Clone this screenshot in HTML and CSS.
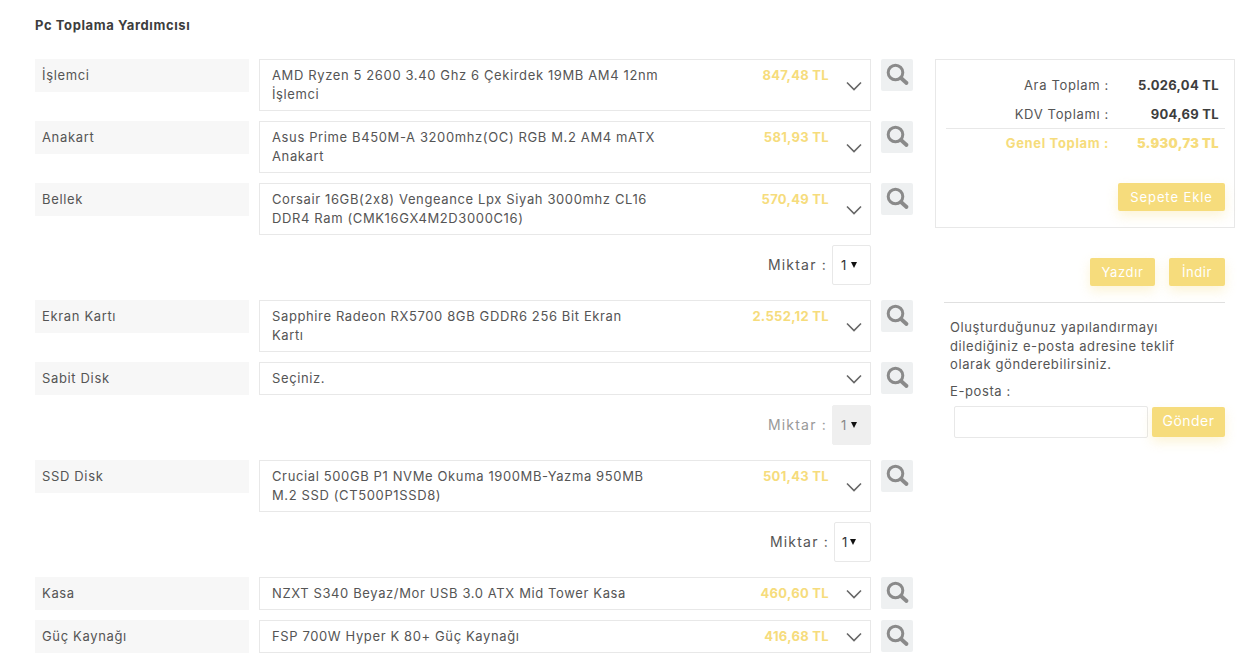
FILE: index.html
```html
<!DOCTYPE html>
<html lang="tr">
<head>
  <meta charset="UTF-8" />
  <title>Pc Toplama Yardımcısı</title>
  <link rel="stylesheet" href="styles.css">
</head>
<body>

<svg class="defs" width="0" height="0">
  <symbol id="search" viewBox="0 0 32 32">
    <circle cx="14.5" cy="13.5" r="7.3" fill="none" stroke="currentColor" stroke-width="3"/>
    <path d="M20 19l5.5 5" fill="none" stroke="currentColor" stroke-width="3.8" stroke-linecap="round"/>
  </symbol>
  <symbol id="chevron" viewBox="0 0 16 10">
    <path d="M1 1.5l7 7 7-7" fill="none" stroke="currentColor" stroke-width="1.6"/>
  </symbol>
</svg>

<h1 class="title">Pc Toplama Yardımcısı</h1>

<div class="page">
  <!-- Parça listesi -->
  <div class="parts">
    <div class="row">
      <div class="label">İşlemci</div>
      <div class="select tall">
        <span class="name">AMD Ryzen 5 2600 3.40 Ghz 6 Çekirdek 19MB AM4 12nm İşlemci</span>
        <span class="price">847,48 TL</span>
        <svg class="chevron"><use href="#chevron"/></svg>
      </div>
      <div class="search"><svg><use href="#search"/></svg></div>
    </div>
    <div class="row">
      <div class="label">Anakart</div>
      <div class="select tall">
        <span class="name">Asus Prime B450M-A 3200mhz(OC) RGB M.2 AM4 mATX Anakart</span>
        <span class="price">581,93 TL</span>
        <svg class="chevron"><use href="#chevron"/></svg>
      </div>
      <div class="search"><svg><use href="#search"/></svg></div>
    </div>
    <div class="row">
      <div class="label">Bellek</div>
      <div class="select tall">
        <span class="name">Corsair 16GB(2x8) Vengeance Lpx Siyah 3000mhz CL16 DDR4 Ram (CMK16GX4M2D3000C16)</span>
        <span class="price">570,49 TL</span>
        <svg class="chevron"><use href="#chevron"/></svg>
      </div>
      <div class="search"><svg><use href="#search"/></svg></div>
    </div>
    <div class="qty">
      <span class="qty-label">Miktar :</span>
      <div class="qty-select">1<i></i></div>
    </div>
    <div class="row">
      <div class="label">Ekran Kartı</div>
      <div class="select tall">
        <span class="name">Sapphire Radeon RX5700 8GB GDDR6 256 Bit Ekran<br>Kartı</span>
        <span class="price">2.552,12 TL</span>
        <svg class="chevron"><use href="#chevron"/></svg>
      </div>
      <div class="search"><svg><use href="#search"/></svg></div>
    </div>
    <div class="row">
      <div class="label">Sabit Disk</div>
      <div class="select">
        <span class="name">Seçiniz.</span>
        <svg class="chevron"><use href="#chevron"/></svg>
      </div>
      <div class="search"><svg><use href="#search"/></svg></div>
    </div>
    <div class="qty disabled">
      <span class="qty-label">Miktar :</span>
      <div class="qty-select">1<i></i></div>
    </div>
    <div class="row">
      <div class="label">SSD Disk</div>
      <div class="select tall">
        <span class="name">Crucial 500GB P1 NVMe Okuma 1900MB-Yazma 950MB M.2 SSD (CT500P1SSD8)</span>
        <span class="price">501,43 TL</span>
        <svg class="chevron"><use href="#chevron"/></svg>
      </div>
      <div class="search"><svg><use href="#search"/></svg></div>
    </div>
    <div class="qty narrow">
      <span class="qty-label">Miktar :</span>
      <div class="qty-select">1<i></i></div>
    </div>
    <div class="row">
      <div class="label">Kasa</div>
      <div class="select">
        <span class="name">NZXT S340 Beyaz/Mor USB 3.0 ATX Mid Tower Kasa</span>
        <span class="price">460,60 TL</span>
        <svg class="chevron"><use href="#chevron"/></svg>
      </div>
      <div class="search"><svg><use href="#search"/></svg></div>
    </div>
    <div class="row last">
      <div class="label">Güç Kaynağı</div>
      <div class="select">
        <span class="name">FSP 700W Hyper K 80+ Güç Kaynağı</span>
        <span class="price">416,68 TL</span>
        <svg class="chevron"><use href="#chevron"/></svg>
      </div>
      <div class="search"><svg><use href="#search"/></svg></div>
    </div>
  </div>

  <!-- Toplamlar ve teklif -->
  <div class="side">
    <div class="summary">
      <div class="sum-line"><span>Ara Toplam :</span><b>5.026,04 TL</b></div>
      <div class="sum-line"><span>KDV Toplamı :</span><b>904,69 TL</b></div>
      <div class="sum-line total"><span>Genel Toplam :</span><b>5.930,73 TL</b></div>
      <div class="cart"><a class="btn wide">Sepete Ekle</a></div>
    </div>
    <div class="actions">
      <a class="btn print">Yazdır</a>
      <a class="btn download">İndir</a>
    </div>
    <div class="offer">
      <p>Oluşturduğunuz yapılandırmayı dilediğiniz e-posta adresine teklif olarak gönderebilirsiniz.</p>
      <div class="mail-label">E-posta :</div>
      <div class="mail">
        <input type="text" class="mail-input" />
        <a class="btn send">Gönder</a>
      </div>
    </div>
  </div>
</div>

</body>
</html>
```

FILE: styles.css
```css
* {
  box-sizing: border-box;
}

html, body {
  height: 100%;
  overflow: hidden;
}

body {
  margin: 0;
  padding: 0 11px 0 35px;
  font-family: "Inter", "Open Sans", sans-serif;
  font-size: 13px;
  color: #555;
  background: #fff;
}

.defs {
  position: absolute;
}

.title {
  margin: 0;
  padding-top: 17px;
  height: 59px;
  font-size: 13px;
  line-height: 16px;
  font-weight: 700;
  letter-spacing: .6px;
  color: #3d3d3d;
}

.page {
  display: flex;
  gap: 22px;
}

/* Parça listesi */
.parts {
  width: 878px;
}

.row {
  display: flex;
  align-items: flex-start;
  margin-bottom: 10px;
}

.row.last {
  margin-bottom: 0;
}

.label {
  width: 214px;
  height: 33px;
  margin-right: 10px;
  padding-left: 7px;
  line-height: 32px;
  background: #f7f7f7;
  letter-spacing: .65px;
}

.select {
  position: relative;
  display: flex;
  align-items: center;
  width: 612px;
  height: 33px;
  margin-right: 10px;
  padding-left: 12px;
  border: 1px solid #e8e8e8;
  line-height: 19px;
  letter-spacing: .62px;
}

.select.tall {
  height: 52px;
  align-items: flex-start;
  padding-top: 6px;
}

.name {
  width: 392px;
}

.price {
  position: absolute;
  right: 41px;
  top: 6px;
  font-weight: 700;
  letter-spacing: .3px;
  color: #f6dc7c;
}

.chevron {
  position: absolute;
  right: 8px;
  top: 11px;
  width: 16px;
  height: 10px;
  color: #666;
}

.select.tall .chevron {
  top: 21px;
}

.search {
  width: 32px;
  height: 32px;
  border-radius: 2px;
  background: #eef0f1;
  color: #8a8a8a;
}

.search svg {
  display: block;
  width: 32px;
  height: 32px;
}

/* Miktar */
.qty {
  display: flex;
  justify-content: flex-end;
  align-items: center;
  gap: 5px;
  width: 836px;
  height: 40px;
  margin-bottom: 15px;
}

.qty-label {
  font-size: 14px;
  line-height: 38px;
  letter-spacing: 1.2px;
}

.qty-select {
  display: flex;
  align-items: center;
  width: 39px;
  height: 40px;
  padding-left: 8px;
  border: 1px solid #e8e8e8;
  border-radius: 2px;
  font-size: 13px;
  color: #333;
}

.qty-select i {
  width: 0;
  height: 0;
  margin-left: 5px;
  border-left: 3px solid transparent;
  border-right: 3px solid transparent;
  border-top: 6px solid #111;
}

.qty.narrow .qty-select {
  width: 37px;
  padding-left: 7px;
}

.qty.narrow .qty-select i {
  margin-left: 3px;
}

.qty.disabled .qty-label {
  color: #999;
}

.qty.disabled .qty-select {
  background: #efefef;
  border-color: #efefef;
  color: #888;
}

/* Sağ kolon */
.side {
  width: 300px;
}

.summary {
  height: 169px;
  padding: 10px 9px 0 10px;
  border: 1px solid #e8e8e8;
}

.sum-line {
  display: flex;
  justify-content: flex-end;
  align-items: center;
  height: 29px;
  padding-right: 6px;
  letter-spacing: .65px;
}

.sum-line span {
  margin-right: 26px;
}

.sum-line b {
  width: 84px;
  text-align: right;
  letter-spacing: .3px;
  color: #3d3d3d;
}

.sum-line.total {
  height: 29px;
  border-top: 1px solid #e8e8e8;
  color: #f6dc7c;
  font-weight: 700;
}

.sum-line.total b {
  color: #f6dc7c;
}

.cart {
  display: flex;
  justify-content: flex-end;
  margin-top: 26px;
}

.btn {
  display: block;
  height: 28px;
  line-height: 28px;
  text-align: center;
  border-radius: 2px;
  background: #f6dc7c;
  color: #fff;
  letter-spacing: .6px;
  box-shadow: 0 5px 12px rgba(246, 220, 124, .3);
}

.btn.wide {
  width: 107px;
  letter-spacing: .9px;
}

.btn.print {
  width: 65px;
}

.btn.download {
  width: 56px;
}

.actions {
  display: flex;
  justify-content: flex-end;
  gap: 14px;
  margin-top: 30px;
  padding-right: 10px;
}

.offer {
  margin: 16px 10px 0 9px;
  border-top: 1px solid #e0e0e0;
  padding: 15px 0 0 6px;
}

.offer p {
  width: 250px;
  margin: 0;
  line-height: 18.5px;
  letter-spacing: .6px;
}

.mail-label {
  margin-top: 8px;
  line-height: 18px;
  letter-spacing: .6px;
}

.mail {
  display: flex;
  align-items: center;
  gap: 4px;
  margin-top: 6px;
  padding-left: 4px;
}

.mail-input {
  width: 194px;
  height: 32px;
  border: 1px solid #e8e8e8;
  border-radius: 2px;
  outline: none;
}

.btn.send {
  width: 73px;
  height: 30px;
  line-height: 28px;
  font-size: 14px;
  letter-spacing: .5px;
}
```
